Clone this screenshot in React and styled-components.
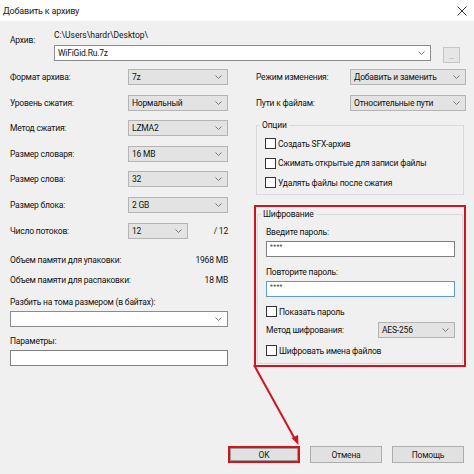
import React from 'react';
import styled, { createGlobalStyle } from 'styled-components';

const GlobalStyle = createGlobalStyle`
	html, body {
		margin: 0;
		padding: 0;
	}
	body {
		font-family: Roboto, "Liberation Sans", Arial, sans-serif;
	}
`;

const Window = styled.div`
	position: relative;
	width: 474px;
	height: 474px;
	background: #f0f0f0;
	display: flex;
	flex-direction: column;
	font-size: 8.5px;
	letter-spacing: -0.2px;
	color: #111;
	overflow: hidden;
`;

const TitleBar = styled.div`
	height: 21px;
	background: #fff;
	display: flex;
	align-items: center;
	justify-content: space-between;
	padding: 0 7px 0 3px;
	font-size: 9px;
	letter-spacing: -0.2px;
	color: #1a1a1a;
`;

const Body = styled.div`
	padding: 0 8px 0 10px;
`;

const ArchiveBlock = styled.div`
	display: grid;
	grid-template-columns: 44px 1fr;
	margin-top: 8px;
`;

const ArchiveLabel = styled.div`
	padding-top: 5px;
	line-height: 12px;
`;

const PathText = styled.div`
	line-height: 12px;
	margin-bottom: 4px;
	font-size: 8.5px;
	letter-spacing: 0;
`;

const ComboRow = styled.div`
	display: flex;
	align-items: flex-start;
	gap: 12px;
`;

const DotsButton = styled.div`
	width: 15px;
	height: 14px;
	margin: 2px 6px 0 0;
	border: 1px solid #c6c6c6;
	background: #e6e6e6;
	color: #8a8a8a;
	font-size: 7px;
	display: flex;
	align-items: flex-end;
	justify-content: center;
	line-height: 9px;
`;

const Columns = styled.div`
	display: grid;
	grid-template-columns: 218px 212px;
	column-gap: 26px;
	margin-top: 6px;
`;

const Column = styled.div`
	display: flex;
	flex-direction: column;
`;

const FieldRow = styled.div`
	display: grid;
	grid-template-columns: ${(p) => p.$labelWidth || '118px'} 1fr;
	align-items: center;
	height: 16px;
	margin-top: ${(p) => p.$before || 0}px;
	margin-bottom: ${(p) => p.$after ?? 9.6}px;
	padding-left: ${(p) => p.$indent || 0}px;
`;

const Select = styled.div`
	position: relative;
	box-sizing: border-box;
	height: 16px;
	width: ${(p) => (p.$width ? `${p.$width}px` : '100%')};
	border: 1px solid ${(p) => (p.$editable ? '#8c8c8c' : '#b4b4b4')};
	background: ${(p) => (p.$editable ? '#fff' : '#e3e3e3')};
	display: flex;
	align-items: center;
	padding-left: 3px;
	line-height: 12px;
	white-space: nowrap;
	flex: ${(p) => (p.$grow ? 1 : 'none')};
`;

const Chevron = styled.svg`
	position: absolute;
	right: 5px;
	top: 50%;
	margin-top: -2px;
`;

const ThreadsValue = styled.div`
	display: flex;
	align-items: center;
	justify-content: space-between;
`;

const InfoRow = styled.div`
	display: flex;
	justify-content: space-between;
	line-height: 12px;
	margin-top: ${(p) => p.$top}px;
`;

const TextLabel = styled.div`
	line-height: 12px;
	margin-top: ${(p) => p.$top || 0}px;
	margin-bottom: ${(p) => p.$bottom || 0}px;
`;

const TextInput = styled.div`
	box-sizing: border-box;
	height: 16px;
	border: 1px solid ${(p) => (p.$focused ? '#5b9bd5' : '#7f7f7f')};
	background: #fff;
	font-size: 6.5px;
	letter-spacing: 0.4px;
	padding: 1px 0 0 3px;
	line-height: 8px;
	color: #444;
`;

const Group = styled.fieldset`
	margin: ${(p) => p.$margin || '0 2px'};
	padding: 0 7px ${(p) => p.$bottom}px 8px;
	border: 1px solid #d9d9d9;
	display: flex;
	flex-direction: column;
	gap: ${(p) => p.$gap || 0}px;
	min-width: 0;
`;

const Legend = styled.legend`
	padding: 0 2px;
	margin-left: -5px;
	line-height: 12px;
`;

const Highlight = styled.div`
	border: 2px solid #d3141f;
	padding: 1px 1px 1px 1px;
	margin-top: 10px;
`;

const CheckRow = styled.label`
	display: flex;
	align-items: center;
	gap: 2px;
	line-height: 12px;
	height: 13px;
	margin-top: ${(p) => p.$top || 0}px;
`;

const Box = styled.span`
	box-sizing: border-box;
	width: 11px;
	height: 11px;
	border: 1px solid #333;
	background: #fff;
`;

const Footer = styled.div`
	margin-top: auto;
	display: flex;
	justify-content: flex-end;
	gap: 10px;
	padding: 0 10px 11px 0;
`;

const Button = styled.div`
	box-sizing: border-box;
	width: 72px;
	height: 17px;
	display: flex;
	align-items: center;
	justify-content: center;
	background: #e1e1e1;
	border: ${(p) => (p.$highlight ? '2px solid #d3141f' : '1px solid #adadad')};
	box-shadow: ${(p) => (p.$highlight ? 'inset 0 0 0 1px #9a9a9a' : 'none')};
	color: #1a1a1a;
`;

const Overlay = styled.svg`
	position: absolute;
	left: 0;
	top: 0;
	pointer-events: none;
`;

const ChevronIcon = () => (
	<Chevron width="7" height="4" viewBox="0 0 7 4">
		<path d="M0.5 0.5 L3.5 3.5 L6.5 0.5" fill="none" stroke="#7a7a7a" strokeWidth="1" />
	</Chevron>
);

const Dropdown = ({ children, ...rest }) => (
	<Select {...rest}>
		{children}
		<ChevronIcon />
	</Select>
);

const Check = ({ children, top }) => (
	<CheckRow $top={top}>
		<Box />
		{children}
	</CheckRow>
);

const leftFields = [
	['Формат архива:', '7z'],
	['Уровень сжатия:', 'Нормальный'],
	['Метод сжатия:', 'LZMA2'],
	['Размер словаря:', '16 MB'],
	['Размер слова:', '32'],
	['Размер блока:', '2 GB'],
];

export default function App() {
	return (
		<Window>
			<GlobalStyle />
			<TitleBar>
				<span>Добавить к архиву</span>
				<svg width="10" height="10" viewBox="0 0 10 10">
					<path d="M0.5 0.5 L9.5 9.5 M9.5 0.5 L0.5 9.5" stroke="#333" strokeWidth="1" />
				</svg>
			</TitleBar>
			<Body>
				<ArchiveBlock>
					<ArchiveLabel>Архив:</ArchiveLabel>
					<div>
						<PathText>C:\Users\hardr\Desktop\</PathText>
						<ComboRow>
							<Dropdown $editable $grow>WiFiGid.Ru.7z</Dropdown>
							<DotsButton>...</DotsButton>
						</ComboRow>
					</div>
				</ArchiveBlock>

				<Columns>
					<Column>
						{leftFields.map(([label, value]) => (
							<FieldRow key={label}>
								<span>{label}</span>
								<Dropdown>{value}</Dropdown>
							</FieldRow>
						))}
						<FieldRow $after={0}>
							<span>Число потоков:</span>
							<ThreadsValue>
								<Dropdown $width={60}>12</Dropdown>
								<span>/ 12</span>
							</ThreadsValue>
						</FieldRow>
						<InfoRow $top={15}>
							<span>Объем памяти для упаковки:</span>
							<span>1968 MB</span>
						</InfoRow>
						<InfoRow $top={8}>
							<span>Объем памяти для распаковки:</span>
							<span>18 MB</span>
						</InfoRow>
						<TextLabel $top={10} $bottom={3}>Разбить на тома размером (в байтах):</TextLabel>
						<Dropdown $editable />
						<TextLabel $top={8} $bottom={3}>Параметры:</TextLabel>
						<TextInput />
					</Column>

					<Column>
						<FieldRow $labelWidth="94px" $indent={2} $after={10}>
							<span>Режим изменения:</span>
							<Dropdown>Добавить и заменить</Dropdown>
						</FieldRow>
						<FieldRow $labelWidth="94px" $indent={2} $after={8}>
							<span>Пути к файлам:</span>
							<Dropdown>Относительные пути</Dropdown>
						</FieldRow>
						<Group $bottom={5} $gap={6.5}>
							<Legend>Опции</Legend>
							<Check top={6}>Создать SFX-архив</Check>
							<Check>Сжимать открытые для записи файлы</Check>
							<Check>Удалять файлы после сжатия</Check>
						</Group>
						<Highlight>
							<Group $margin="0" $bottom={6}>
								<Legend>Шифрование</Legend>
								<TextLabel $top={6} $bottom={3}>Введите пароль:</TextLabel>
								<TextInput>****</TextInput>
								<TextLabel $top={9} $bottom={3}>Повторите пароль:</TextLabel>
								<TextInput $focused>****</TextInput>
								<Check top={8}>Показать пароль</Check>
								<FieldRow $labelWidth="112px" $before={4} $after={0}>
									<span>Метод шифрования:</span>
									<Dropdown>AES-256</Dropdown>
								</FieldRow>
								<Check top={6}>Шифровать имена файлов</Check>
							</Group>
						</Highlight>
					</Column>
				</Columns>
			</Body>

			<Footer>
				<Button $highlight>OK</Button>
				<Button>Отмена</Button>
				<Button>Помощь</Button>
			</Footer>

			<Overlay width="474" height="474" viewBox="0 0 474 474">
				<line x1="254" y1="365" x2="296" y2="441" stroke="#d3141f" strokeWidth="2" />
				<path d="M298.5 445 L291.5 438 L298 435 Z" fill="#d3141f" />
			</Overlay>
		</Window>
	);
}
